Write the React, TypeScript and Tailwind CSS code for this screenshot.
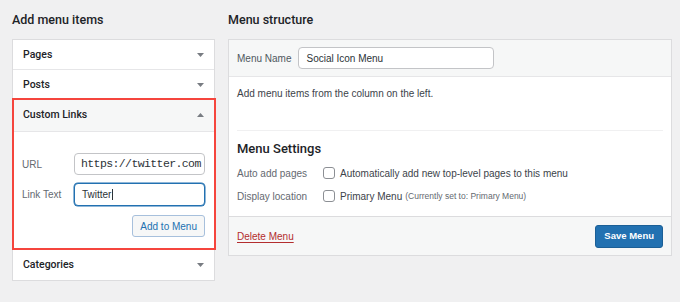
import React from 'react';

const body = "font-['Liberation_Sans',Arial,sans-serif]";
const strong = "font-['Roboto','Liberation_Sans',sans-serif] font-medium";

function Arrow({ up }: { up?: boolean }) {
  return (
    <svg width="7" height="4" viewBox="0 0 7 4" className="text-[#787c82]">
      {up ? <path d="M0 4 L3.5 0 L7 4 Z" fill="currentColor" /> : <path d="M0 0 L7 0 L3.5 4 Z" fill="currentColor" />}
    </svg>
  );
}

function Section({ title, up, className = '' }: { title: string; up?: boolean; className?: string }) {
  return (
    <div className={`flex items-center justify-between pl-[10px] pr-[10px] ${className}`}>
      <span className={`text-[10.5px] text-[#1d2327] ${strong}`}>{title}</span>
      <Arrow up={up} />
    </div>
  );
}

function Checkbox() {
  return <span className="block h-3 w-3 shrink-0 rounded-[3px] border border-[#8c8f94] bg-white" />;
}

export default function App() {
  return (
    <div className={`flex h-[302px] w-[680px] gap-[13px] bg-[#f0f0f1] pl-3 ${body}`}>
      {/* left column */}
      <div className="flex w-[203px] flex-col">
        <h2 className={`mt-[12px] mb-[11px] h-4 text-[12.5px] leading-4 text-[#1d2327] ${strong}`}>Add menu items</h2>
        <div className="border border-[#dcdcde] bg-white">
          <Section title="Pages" className="h-[30px] border-b border-[#e6e6e8]" />
          <Section title="Posts" className="h-[29px]" />
          <div className="relative">
            <Section title="Custom Links" up className="h-[33px] border-b border-[#e6e6e8] bg-[#f6f7f7]" />
            <div className="flex flex-col gap-2 pt-[21px] pr-[9px] pb-[12px] pl-[9px]">
              <div className="flex items-center">
                <span className="w-[52px] text-[10px] text-[#646970]">URL</span>
                <div className="flex h-[22px] flex-1 items-center overflow-hidden rounded-[4px] border border-[#c3c4c7] bg-white pl-[6px]">
                  <span className="whitespace-nowrap font-['Liberation_Mono',monospace] text-[11.5px] tracking-[-0.6px] text-[#2c3338]">
                    https://twitter.com
                  </span>
                </div>
              </div>
              <div className="flex items-center">
                <span className="w-[52px] text-[10px] text-[#646970]">Link Text</span>
                <div className="flex h-[23px] flex-1 items-center rounded-[4px] border border-[#2271b1] bg-white pl-[7px] shadow-[0_0_0_0.5px_#2271b1]">
                  <span className="text-[10px] text-[#2c3338]">Twitter</span>
                  <span className="ml-px h-[11px] w-px bg-[#2c3338]" />
                </div>
              </div>
              <div className="flex justify-end pt-px">
                <span className="flex h-[22px] items-center rounded-[3px] border border-[#a7c0dc] bg-[#f6f7f7] px-[7px] text-[10px] text-[#2271b1]">
                  Add to Menu
                </span>
              </div>
            </div>
            <div className="pointer-events-none absolute -top-px -right-[2px] -bottom-px -left-px border-2 border-[#f5453d]" />
          </div>
          <Section title="Categories" className="h-[31px]" />
        </div>
      </div>

      {/* right column */}
      <div className="flex w-[444px] flex-col">
        <h2 className={`mt-[12px] mb-[11px] h-4 text-[12.5px] leading-4 text-[#1d2327] ${strong}`}>Menu structure</h2>
        <div className="border border-[#dcdcde] bg-white">
          <div className="flex h-[37px] items-center gap-[7px] border-b border-[#e6e6e8] bg-[#f6f7f7] px-2">
            <span className="text-[10px] text-[#50575e]">Menu Name</span>
            <div className="flex h-[22px] w-[196px] items-center rounded-[4px] border border-[#c3c4c7] bg-white pl-[7px]">
              <span className="text-[10px] text-[#2c3338]">Social Icon Menu</span>
            </div>
          </div>
          <div className="px-2">
            <p className="pt-[10px] text-[10px] leading-[14px] text-[#3c434a]">Add menu items from the column on the left.</p>
            <div className="mt-[29px] border-t border-[#f0f0f1]" />
            <h3 className={`mt-[10px] text-[13px] leading-4 text-[#1d2327] ${strong}`}>Menu Settings</h3>
            <div className="mt-[9px] flex h-[14px] items-center">
              <span className="w-[86px] text-[10px] text-[#646970]">Auto add pages</span>
              <Checkbox />
              <span className="ml-[5px] text-[10px] text-[#3c434a]">Automatically add new top-level pages to this menu</span>
            </div>
            <div className="mt-[9px] mb-[13px] flex h-[14px] items-center">
              <span className="w-[86px] text-[10px] text-[#646970]">Display location</span>
              <Checkbox />
              <span className="ml-[5px] text-[10px] text-[#3c434a]">Primary Menu</span>
              <span className="ml-[3px] text-[8.5px] text-[#646970]">(Currently set to: Primary Menu)</span>
            </div>
          </div>
          <div className="flex h-[39px] items-center justify-between border-t border-[#dcdcde] bg-[#f6f7f7] px-2">
            <span className="text-[10px] text-[#b32d2e] underline underline-offset-2">Delete Menu</span>
            <span className="flex h-[23px] items-center rounded-[3px] border border-[#1b5f96] bg-[#2271b1] px-[8px] text-[9.5px] font-bold text-white">
              Save Menu
            </span>
          </div>
        </div>
      </div>
    </div>
  );
}
